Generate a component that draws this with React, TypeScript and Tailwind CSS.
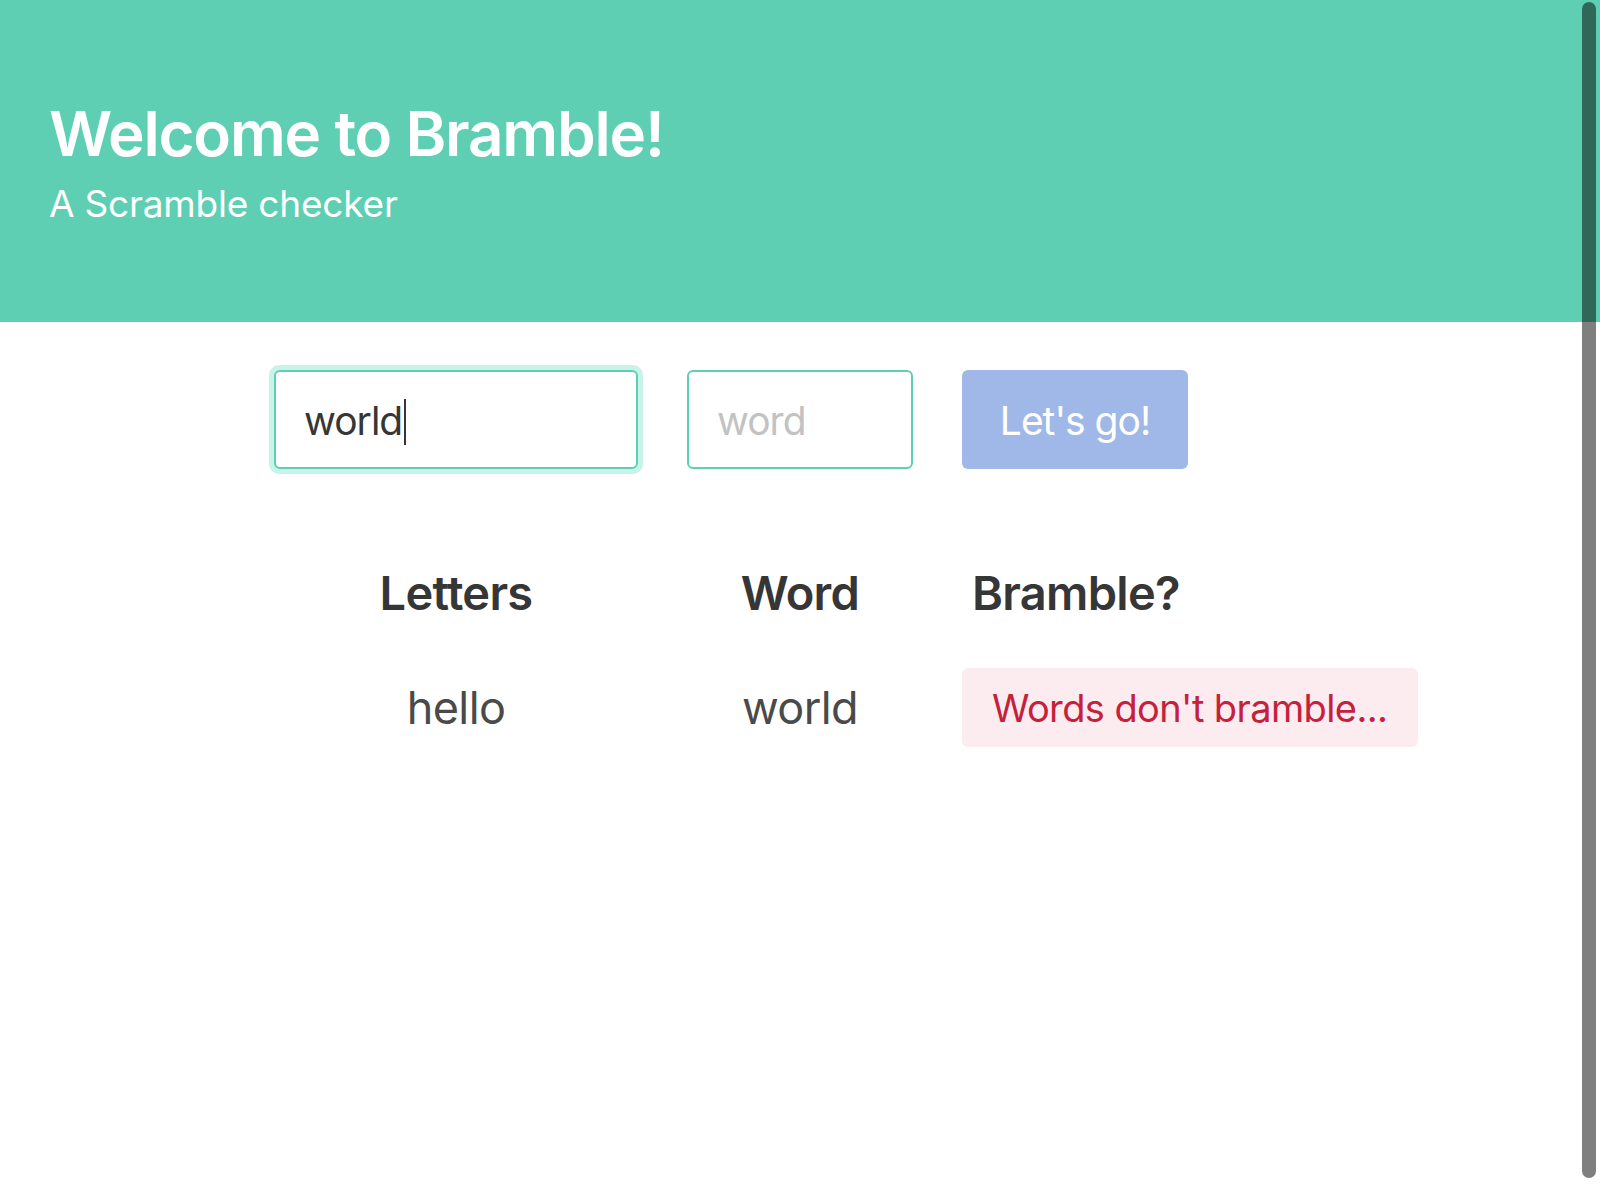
import React from "react";

export default function App() {
  return (
    <div className="relative min-h-[1200px] w-[1600px] overflow-hidden bg-white font-['Inter',sans-serif]">
      <header className="flex h-[322px] flex-col justify-center bg-[#5ecfb2] pl-[49px] pt-[4px]">
        <h1 className="text-[62px] font-semibold leading-[1.125] tracking-[-1.2px] text-white">
          Welcome to Bramble!
        </h1>
        <p className="mt-[12px] text-[37px] font-normal leading-[1.25] tracking-[-0.2px] text-white">
          A Scramble checker
        </p>
      </header>

      <main className="pl-[269px] pt-[43px]">
        <div className="flex items-center gap-[44px]">
          <div className="rounded-[10px] bg-[#c8f3e8] p-[5px]">
            <div className="flex h-[99px] w-[364px] items-center rounded-[6px] border-2 border-[#5ecfb2] bg-white pl-[28px] pt-[4px] text-[39px] tracking-[-1px] text-[#363636]">
              <span>world</span>
              <span className="ml-[2px] h-[46px] w-[2px] bg-[#363636]" />
            </div>
          </div>
          <div className="flex h-[99px] w-[226px] items-center rounded-[6px] border-2 border-[#5ecfb2] bg-white pl-[28px] pt-[4px] text-[39px] tracking-[-1px] text-[#c2c2c2]">
            word
          </div>
          <button className="ml-[5px] flex h-[99px] w-[226px] items-center justify-center rounded-[6px] bg-[#a0b8e8] pt-[4px] text-[39px] tracking-[-1px] text-white">
            Let's go!
          </button>
        </div>

        <div className="mt-[90px] grid grid-cols-[364px_226px_456px] gap-x-[49px] pl-[5px]">
          <div className="text-center text-[47px] font-semibold leading-[1.25] tracking-[-0.7px] text-[#363636]">Letters</div>
          <div className="text-center text-[47px] font-semibold leading-[1.25] tracking-[-0.7px] text-[#363636]">Word</div>
          <div className="pl-[10px] text-[47px] font-semibold leading-[1.25] tracking-[-0.7px] text-[#363636]">Bramble?</div>

          <div className="mt-[45px] flex h-[79px] items-center justify-center text-[45px] tracking-[-0.6px] text-[#4a4a4a]">hello</div>
          <div className="mt-[45px] flex h-[79px] items-center justify-center text-[45px] tracking-[-0.6px] text-[#4a4a4a]">world</div>
          <div className="mt-[45px] flex h-[79px] items-center whitespace-nowrap rounded-[6px] bg-[#fcecf0] pl-[30px] pt-[2px] text-[38px] tracking-[-0.6px] text-[#c4213c]">
            Words don't bramble...
          </div>
        </div>
      </main>

      <div className="absolute right-[4px] top-[2px] h-[1176px] w-[14px] rounded-full bg-black/50" />
    </div>
  );
}
